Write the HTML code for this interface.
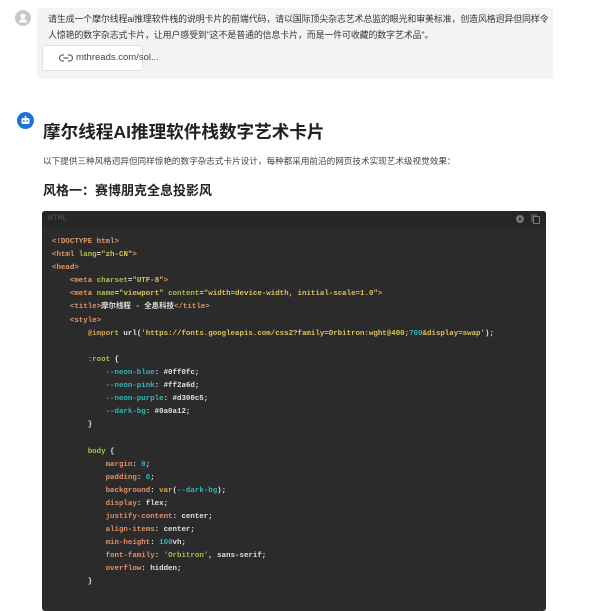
<!DOCTYPE html>
<html><head><meta charset="utf-8"><style>
body{margin:0;width:600px;height:601px;overflow:hidden;background:#fff;font-family:"Liberation Sans","Noto Sans CJK SC",sans-serif;position:relative}
.av{position:absolute;left:15px;top:10px;width:16px;height:16px;border-radius:50%;background:#c8c8c8}
.ubox{position:absolute;left:37px;top:8px;width:516px;height:71px;background:#f4f4f4;border-radius:3px}
.ut{position:absolute;left:48px;top:11px;width:503px;font-size:8.95px;letter-spacing:-0.12px;line-height:16px;color:#333}
.link{position:absolute;left:42px;top:45px;width:99px;height:24px;background:#fff;border:1px solid #e2e2e2;border-radius:3px;font-size:9.5px;color:#444;line-height:24px}
.link span{position:absolute;left:33px}
.bot{position:absolute;left:17px;top:112px;width:17px;height:17px;border-radius:50%;background:#1d74d6}
h1{position:absolute;left:43px;top:119px;margin:0;font-size:17.6px;font-weight:bold;color:#222;white-space:nowrap}
.p{position:absolute;left:43px;top:155px;font-size:8.6px;color:#444;white-space:nowrap}
h2{position:absolute;left:43px;top:180px;margin:0;font-size:13px;font-weight:bold;color:#222;white-space:nowrap}
.code{position:absolute;left:42px;top:211px;width:504px;height:400px;background:#2b2b2b;border-radius:3px}
.hd{height:16px;background:#262626;font-size:8px;color:#555;line-height:16px;padding-left:6px;font-family:"Liberation Mono",monospace;border-radius:3px 3px 0 0}
pre{margin:0;position:absolute;left:10px;top:25px;font-family:"Liberation Mono","Noto Sans CJK SC",monospace;font-size:7.45px;line-height:13.1px;color:#e0e0e0;font-weight:bold}
.t{color:#e09868}.a{color:#a3c14a}.s{color:#dcc15a}.c{color:#2fb6bd}.n{color:#2fb6bd}.pr{color:#e0906a}.k{color:#d4a84a}
</style></head><body>
<div class="av"><svg width="16" height="16" viewBox="0 0 16 16"><circle cx="8" cy="6.3" r="2.6" fill="#fff"/><path d="M3.8 12.5c.6-2.3 2.2-3.2 4.2-3.2s3.6.9 4.2 3.2z" fill="#fff"/></svg></div>
<div class="ubox"></div>
<div class="ut">请生成一个摩尔线程ai推理软件栈的说明卡片的前端代码，请以国际顶尖杂志艺术总监的眼光和审美标准，创造风格迥异但同样令<br>人惊艳的数字杂志式卡片，让用户感受到"这不是普通的信息卡片，而是一件可收藏的数字艺术品"。</div>
<div class="link"><svg style="position:absolute;left:16px;top:7px" width="14" height="10" viewBox="0 0 14 10"><path d="M5 2H3.5a3 3 0 0 0 0 6H5M9 2h1.5a3 3 0 0 1 0 6H9M4.5 5h5" fill="none" stroke="#666" stroke-width="1.2"/></svg><span>mthreads.com/sol...</span></div>
<div class="bot"><svg width="17" height="17" viewBox="0 0 17 17"><rect x="4.5" y="6" width="8" height="6" rx="1.5" fill="#fff"/><rect x="7.8" y="3.8" width="1.4" height="2.4" fill="#fff"/><circle cx="6.8" cy="9" r=".9" fill="#1d74d6"/><circle cx="10.2" cy="9" r=".9" fill="#1d74d6"/></svg></div>
<h1>摩尔线程AI推理软件栈数字艺术卡片</h1>
<div class="p">以下提供三种风格迥异但同样惊艳的数字杂志式卡片设计，每种都采用前沿的网页技术实现艺术级视觉效果：</div>
<h2>风格一：赛博朋克全息投影风</h2>
<div class="code"><div class="hd">HTML<svg style="position:absolute;right:22px;top:4px" width="8" height="8"><circle cx="4" cy="4" r="4" fill="#777"/><path d="M3 2v4l3-2z" fill="#2b2b2b"/></svg><svg style="position:absolute;right:6px;top:3px" width="9" height="10"><rect x="2.5" y="2.5" width="6" height="7" fill="none" stroke="#777"/><path d="M1 8V1h5" fill="none" stroke="#777"/></svg></div>
<pre><span class="t">&lt;!DOCTYPE html&gt;</span>
<span class="t">&lt;html</span> <span class="a">lang</span>=<span class="s">"zh-CN"</span><span class="t">&gt;</span>
<span class="t">&lt;head&gt;</span>
    <span class="t">&lt;meta</span> <span class="a">charset</span>=<span class="s">"UTF-8"</span><span class="t">&gt;</span>
    <span class="t">&lt;meta</span> <span class="a">name</span>=<span class="s">"viewport"</span> <span class="a">content</span>=<span class="s">"width=device-width, initial-scale=1.0"</span><span class="t">&gt;</span>
    <span class="t">&lt;title&gt;</span>摩尔线程 - 全息科技<span class="t">&lt;/title&gt;</span>
    <span class="t">&lt;style&gt;</span>
        <span class="k">@import</span> url(<span class="s">'https://fonts.googleapis.com/css2?family=Orbitron:wght@400;<span class="c">700</span>&amp;display=swap'</span>);

        <span class="a">:root</span> {
            <span class="c">--neon-blue</span>: #0ff0fc;
            <span class="c">--neon-pink</span>: #ff2a6d;
            <span class="c">--neon-purple</span>: #d300c5;
            <span class="c">--dark-bg</span>: #0a0a12;
        }

        <span class="a">body</span> {
            <span class="pr">margin</span>: <span class="n">0</span>;
            <span class="pr">padding</span>: <span class="n">0</span>;
            <span class="pr">background</span>: <span class="k">var</span>(<span class="c">--dark-bg</span>);
            <span class="pr">display</span>: flex;
            <span class="pr">justify-content</span>: center;
            <span class="pr">align-items</span>: center;
            <span class="pr">min-height</span>: <span class="n">100</span>vh;
            <span class="pr">font-family</span>: <span class="a">'Orbitron'</span>, sans-serif;
            <span class="pr">overflow</span>: hidden;
        }
</pre></div>
</body></html>
